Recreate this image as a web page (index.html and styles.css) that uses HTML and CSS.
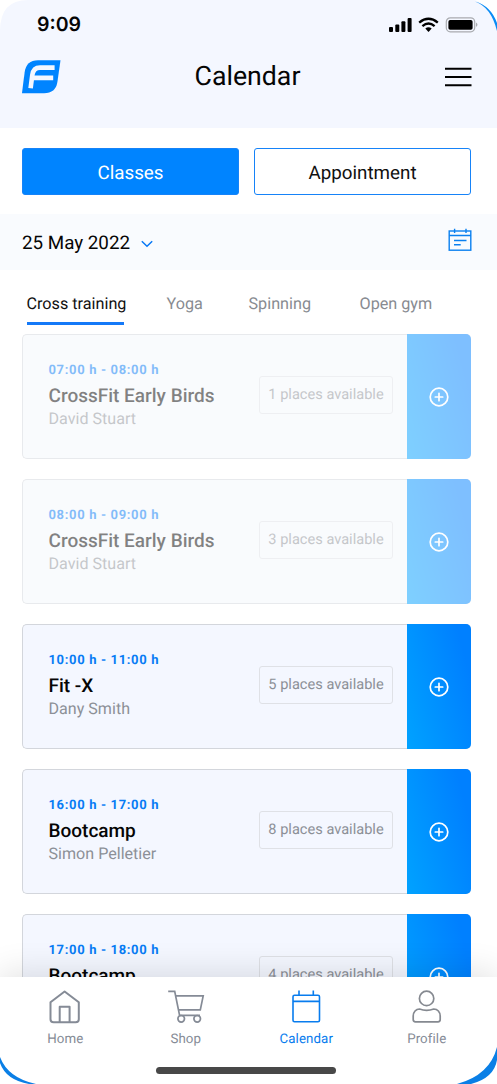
FILE: index.html
```html
<!DOCTYPE html>
<html lang="en">
<head>
<meta charset="utf-8">
<title>Calendar</title>
<link rel="stylesheet" href="styles.css">
</head>
<body>
<svg width="0" height="0" class="defs">
  <symbol id="plus" viewBox="0 0 20 20"><g fill="none" stroke="#fff" stroke-width="1.7" stroke-linecap="round"><circle cx="10" cy="10" r="8.8"/><path d="M10 6.3v7.4M6.3 10h7.4"/></g></symbol>
</svg>
<div class="phone">
  <header class="top">
    <div class="status">
      <span class="time">9:09</span>
      <svg class="signals" width="91" height="18" viewBox="0 0 91 18">
        <rect x="1" y="11" width="4" height="5" rx="1"/><rect x="7.3" y="8.5" width="4" height="7.5" rx="1"/><rect x="13.4" y="5.2" width="4" height="10.8" rx="1"/><rect x="19.6" y="2" width="4" height="14" rx="1"/>
        <g fill="none" stroke="#000" stroke-width="2.4"><path d="M31.2 6.6Q40.5 -1 49.8 6.6"/><path d="M34.4 10.1Q40.5 5 46.6 10.1"/></g>
        <path d="M37.3 12.6Q40.5 10 43.7 12.6L40.5 16Z"/>
        <rect x="58.3" y="1.8" width="28.4" height="14" rx="4" fill="none" stroke="#a9abb0" stroke-width="1.2"/><rect x="60.4" y="3.9" width="24.2" height="9.8" rx="1.8"/><path d="M88 6.6Q91 8.8 88 11Z" fill="#a9abb0"/>
      </svg>
    </div>
    <div class="titlebar">
      <svg width="40" height="34" viewBox="0 0 40 34">
        <path fill="#0084ff" d="M0 33.2L2.6 12.5Q4.2 0.2 16 0.2H38.5L35.4 22Q33.7 33.2 22 33.2Z"/>
        <path fill="none" stroke="#f4f7ff" stroke-width="4.6" d="M8.6 28.2L10.3 15Q11.4 7.6 18 7.6H32.6M10.1 17.9H31.2"/>
      </svg>
      <h1>Calendar</h1>
      <svg class="menu" width="28" height="22" viewBox="0 0 28 22"><path d="M1 2.8h26.5M1 11h26.5M1 19.2h26.5" stroke="#000" stroke-width="2.1"/></svg>
    </div>
  </header>
  <div class="switch"><button class="seg on">Classes</button><button class="seg">Appointment</button></div>
  <div class="date">
    <span>25 May 2022</span>
    <svg class="chev" width="12" height="8" viewBox="0 0 12 8"><path d="M.8 1.2L6 6.2 11.2 1.2" fill="none" stroke="#0878f5" stroke-width="1.5"/></svg>
    <svg class="agenda" width="24" height="24" viewBox="0 0 24 24"><g fill="none" stroke="#0a80f0" stroke-width="1.4"><rect x="1.2" y="3" width="21.6" height="19.2"/><path d="M1.2 7.5H23M6.6.8V5M18 .8V5M6 12.5h12.5M6 16.8h6.7"/></g></svg>
  </div>
  <nav class="tabs"><span class="tab active">Cross training</span><span class="tab">Yoga</span><span class="tab">Spinning</span><span class="tab">Open gym</span></nav>
  <main class="list">
    <article class="card past"><div class="info"><time>07:00 h - 08:00 h</time><h2>CrossFit Early Birds</h2><p>David Stuart</p></div><span class="places">1 places available</span><div class="add"><svg width="20" height="20"><use href="#plus"/></svg></div></article>
    <article class="card past"><div class="info"><time>08:00 h - 09:00 h</time><h2>CrossFit Early Birds</h2><p>David Stuart</p></div><span class="places">3 places available</span><div class="add"><svg width="20" height="20"><use href="#plus"/></svg></div></article>
    <article class="card"><div class="info"><time>10:00 h - 11:00 h</time><h2>Fit -X</h2><p>Dany Smith</p></div><span class="places">5 places available</span><div class="add"><svg width="20" height="20"><use href="#plus"/></svg></div></article>
    <article class="card"><div class="info"><time>16:00 h - 17:00 h</time><h2>Bootcamp</h2><p>Simon Pelletier</p></div><span class="places">8 places available</span><div class="add"><svg width="20" height="20"><use href="#plus"/></svg></div></article>
    <article class="card"><div class="info"><time>17:00 h - 18:00 h</time><h2>Bootcamp</h2><p></p></div><span class="places">4 places available</span><div class="add"><svg width="20" height="20"><use href="#plus"/></svg></div></article>
  </main>
  <footer class="bottom">
    <div class="items">
      <div class="item"><svg width="40" height="36" viewBox="0 0 40 36"><g fill="none" stroke="#858b96" stroke-width="2" stroke-linejoin="round"><path d="M5.5 12.3L19.6 1.5 33.8 12.3V29.2Q33.8 32.3 30.7 32.3H8.6Q5.5 32.3 5.5 29.2Z"/><path d="M14.7 32.3V16.7H24.6V32.3"/></g></svg><span>Home</span></div>
      <div class="item"><svg width="40" height="36" viewBox="0 0 40 36"><g fill="none" stroke="#858b96" stroke-width="1.7"><path d="M2.2 1.3H8.7L13.6 25.4H34M9.8 5.8H37.2L34.3 19.8H12.6"/><circle cx="15.2" cy="28.8" r="3.3"/><circle cx="31.2" cy="28.8" r="3.3"/></g></svg><span>Shop</span></div>
      <div class="item sel"><svg width="40" height="36" viewBox="0 0 40 36"><g fill="none" stroke="#087cee" stroke-width="1.6"><rect x="7" y="5.2" width="26.5" height="26.6" rx="1.5"/><path d="M7 11.4H33M13 .5V5M27.3 .5V5"/></g></svg><span>Calendar</span></div>
      <div class="item"><svg width="40" height="36" viewBox="0 0 40 36"><g fill="none" stroke="#858990" stroke-width="1.7"><circle cx="19.6" cy="8.4" r="7.2"/><path d="M12.5 19Q19.6 21.6 26.8 19C30.5 19 33.2 22.1 33.2 26.1V29.6Q33.2 31.9 31 31.9H8.4Q6.2 31.9 6.2 29.6V26.1C6.2 22.1 9 19 12.5 19Z"/></g></svg><span>Profile</span></div>
    </div>
    <div class="homebar"></div>
  </footer>
  <svg class="frame" width="497" height="1084" viewBox="0 0 497 1084">
    <path fill="#fff" d="M0 0H28Q0 0 0 31ZM475 0H497V31Q492 8 475 0ZM0 1058Q6 1078 36 1084H0ZM497 1047Q491 1077 457 1084H497Z"/>
    <path fill="#0a8cf5" d="M475 1.5Q491 7 497 31V23Q491 6 475 1.5Z"/>
    <path fill="#0a7fe6" d="M0 1057Q8 1078 36 1084H29Q6 1080 0 1063ZM497 1047Q490 1075 457 1084H471Q494 1078 497 1060Z"/>
  </svg>
</div>
</body>
</html>
```

FILE: styles.css
```css
* { box-sizing: border-box; }
body { margin: 0; background: #fff; font-family: Roboto, "Liberation Sans", sans-serif; color: #050505; text-rendering: geometricPrecision; }
h1, h2, p { margin: 0; font-weight: 400; }
svg { display: block; flex: none; }
.defs { position: absolute; }
.phone { position: relative; width: 497px; height: 1084px; overflow: hidden; display: flex; flex-direction: column; background: #fff; }
.top { height: 128px; flex: none; background: #f4f7ff; }
.status { height: 48px; padding: 0 19px 0 37px; display: flex; align-items: center; justify-content: space-between; }
.time { font: 600 19.5px/24px Inter, sans-serif; }
.signals { margin: 1px -1px 0 0; }
.titlebar { height: 58px; padding: 0 25px 0 22px; display: grid; grid-template-columns: 40px 1fr 28px; align-items: center; }
h1 { font-size: 26.7px; line-height: 32px; text-align: center; margin: -3px 11px 0 0; }
.switch { display: flex; gap: 15px; padding: 20px 26px 18px 22px; height: 86px; flex: none; }
.seg { flex: 1; height: 47px; border: 1px solid #1683f8; border-radius: 3px; background: #fff; font: 400 18.8px Roboto, sans-serif; color: #111; padding: 2px 0 0; text-rendering: geometricPrecision; }
.seg.on { background: #0084ff; color: #fff; }
.date { height: 56px; flex: none; display: flex; align-items: center; padding: 1px 25px 0 22px; background: #f9fbfe; font-size: 18.8px; }
.chev { margin: 2px 0 0 11px; }
.agenda { margin: -5px 0 0 auto; }
.tabs { height: 64px; flex: none; padding: 22px 0 0; display: grid; grid-template-columns: 26.5px 140px 82px 111px 1fr; align-items: start; font-size: 16.2px; line-height: 24px; color: #888b91; }
.tab.active { grid-column: 2; width: 97.5px; white-space: nowrap; color: #111; height: 33px; border-bottom: 3px solid #1479f8; }
.list { flex: 1; min-height: 0; overflow: hidden; display: flex; flex-direction: column; gap: 20px; padding: 0 26px 0 22px; }
.card { height: 125px; flex: none; display: flex; align-items: center; border: 1px solid #d3d6dc; border-right: 0; border-radius: 5px; background: #f4f7ff; }
.past { opacity: .5; background: #f5f8fc; }
.info { flex: 1; align-self: flex-start; padding: 27px 0 0 25.5px; }
time { display: block; font-size: 13px; font-weight: 700; line-height: 18px; letter-spacing: .65px; color: #087cf5; }
h2 { font-size: 19px; font-weight: 500; line-height: 24px; margin-top: 4px; white-space: nowrap; }
.info p { font-size: 16.1px; line-height: 22px; color: #8c9097; }
.places { width: 134px; height: 38px; margin: -3px 14px 0 0; border: 1px solid #dfe1e6; border-radius: 3px; text-align: center; font-size: 14.6px; line-height: 35px; color: #8c9097; white-space: nowrap; }
.add { width: 64px; height: 125px; display: flex; align-items: center; justify-content: center; background: linear-gradient(75deg, #00a2ff, #0080ff 85%); border-radius: 0 5px 5px 0; }
.bottom { height: 107px; flex: none; position: relative; background: #fff; box-shadow: 0 -4px 32px rgba(0,0,0,.12); }
.items { display: flex; padding: 13px 10px 0 5px; }
.item { width: 120.7px; display: flex; flex-direction: column; align-items: center; gap: 5px; font-size: 13.3px; line-height: 18px; letter-spacing: .1px; color: #858b96; }
.sel { color: #087cee; }
.homebar { width: 180px; height: 7px; margin: 18px 0 0 156px; border-radius: 4px; background: #484848; }
.frame { position: absolute; inset: 0; pointer-events: none; }
```
